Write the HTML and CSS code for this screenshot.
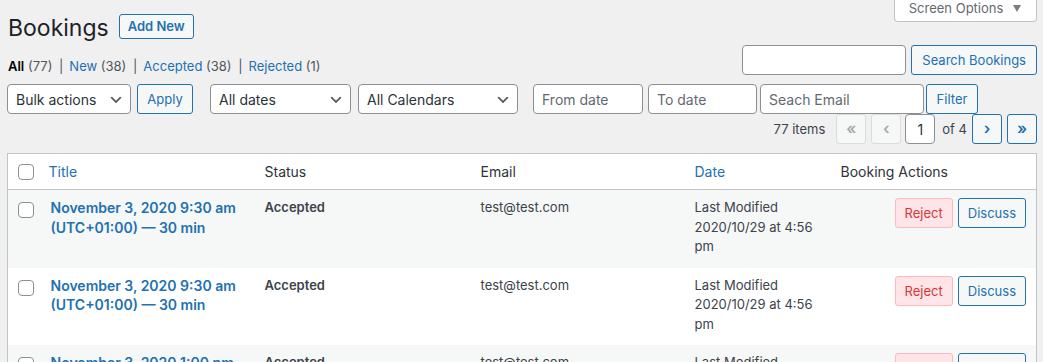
FILE: index.html
```html
<!DOCTYPE html>
<html lang="en">
<head>
    <meta charset="UTF-8">
    <meta name="viewport" content="width=device-width, initial-scale=1.0">
    <title>Bookings</title>
    <link rel="stylesheet" href="styles.css">
</head>
<body>
    <div class="wrap">
        <!-- Screen Options tab -->
        <div class="screen-options">Screen Options <span class="so-arrow"></span></div>

        <!-- Page heading -->
        <div class="page-head">
            <h1 class="page-title">Bookings</h1>
            <a class="page-title-action" href="#">Add New</a>
        </div>

        <!-- Views + search -->
        <div class="views-row">
            <ul class="subsubsub">
                <li><span class="current">All</span> <span class="count">(77)</span> <span class="sep">|</span></li>
                <li><a href="#">New</a> <span class="count">(38)</span> <span class="sep">|</span></li>
                <li><a href="#">Accepted</a> <span class="count">(38)</span> <span class="sep">|</span></li>
                <li><a href="#">Rejected</a> <span class="count">(1)</span></li>
            </ul>
            <div class="search-box">
                <input type="search" class="search-input">
                <button class="button search-btn">Search Bookings</button>
            </div>
        </div>

        <!-- Filters -->
        <div class="tablenav">
            <select class="select bulk"><option>Bulk actions</option></select>
            <button class="button apply">Apply</button>
            <select class="select dates"><option>All dates</option></select>
            <select class="select calendars"><option>All Calendars</option></select>
            <input type="text" class="text-input from" placeholder="From date">
            <input type="text" class="text-input to" placeholder="To date">
            <input type="text" class="text-input email" placeholder="Seach Email">
            <button class="button filter">Filter</button>
        </div>

        <!-- Pagination -->
        <div class="pagination">
            <span class="num-items">77 items</span>
            <span class="page-btn disabled first">&laquo;</span>
            <span class="page-btn disabled">&lsaquo;</span>
            <input type="text" class="current-page" value="1">
            <span class="of-pages">of 4</span>
            <a class="page-btn next" href="#">&rsaquo;</a>
            <a class="page-btn" href="#">&raquo;</a>
        </div>

        <!-- List table -->
        <table class="list-table">
            <colgroup>
                <col class="col-cb">
                <col class="col-title">
                <col class="col-status">
                <col class="col-email">
                <col class="col-date">
                <col>
            </colgroup>
            <thead>
                <tr>
                    <th class="check-column"><input type="checkbox" class="cb"></th>
                    <th><a href="#">Title</a></th>
                    <th>Status</th>
                    <th>Email</th>
                    <th><a href="#">Date</a></th>
                    <th>Booking Actions</th>
                </tr>
            </thead>
            <tbody>
                <tr>
                    <td class="check-column"><input type="checkbox" class="cb"></td>
                    <td><a class="row-title" href="#">November 3, 2020 9:30 am (UTC+01:00) — 30 min</a></td>
                    <td class="status">Accepted</td>
                    <td>test@test.com</td>
                    <td>Last Modified<br>2020/10/29 at 4:56 pm</td>
                    <td class="actions"><button class="button reject">Reject</button><button class="button">Discuss</button></td>
                </tr>
                <tr>
                    <td class="check-column"><input type="checkbox" class="cb"></td>
                    <td><a class="row-title" href="#">November 3, 2020 9:30 am (UTC+01:00) — 30 min</a></td>
                    <td class="status">Accepted</td>
                    <td>test@test.com</td>
                    <td>Last Modified<br>2020/10/29 at 4:56 pm</td>
                    <td class="actions"><button class="button reject">Reject</button><button class="button">Discuss</button></td>
                </tr>
                <tr>
                    <td class="check-column"><input type="checkbox" class="cb"></td>
                    <td><a class="row-title" href="#">November 3, 2020 1:00 pm (UTC+01:00) — 30 min</a></td>
                    <td class="status">Accepted</td>
                    <td>test@test.com</td>
                    <td>Last Modified<br>2020/10/29 at 4:56 pm</td>
                    <td class="actions"><button class="button reject">Reject</button><button class="button">Discuss</button></td>
                </tr>
            </tbody>
        </table>
    </div>
</body>
</html>
```

FILE: styles.css
```css
html, body {
    height: 100%;
    overflow: hidden;
}

body {
    margin: 0;
    background: #f0f0f1;
    color: #3c434a;
    font-family: Inter, "Liberation Sans", sans-serif;
    font-size: 13px;
    line-height: 1.4;
}

a {
    color: #2271b1;
    text-decoration: none;
}

.wrap {
    padding: 0 6px 0 7px;
}

/* Screen Options */
.screen-options {
    float: right;
    height: 22px;
    box-sizing: border-box;
    padding: 0 15px 0 14px;
    background: #fff;
    border: 1px solid #c3c4c7;
    border-top: none;
    border-radius: 0 0 4px 4px;
    color: #646970;
    font-size: 13px;
    line-height: 17px;
}

.so-arrow {
    display: inline-block;
    width: 0;
    height: 0;
    margin-left: 6px;
    border-left: 4px solid transparent;
    border-right: 4px solid transparent;
    border-top: 7px solid #787c82;
    vertical-align: 1px;
}

/* Heading */
.page-head {
    display: flex;
    align-items: flex-start;
    gap: 10px;
    padding-top: 14px;
}

.page-title {
    margin: 0;
    padding: 2px 0 0 1px;
    font-size: 23px;
    font-weight: 400;
    line-height: 25px;
    color: #1d2327;
}

.page-title-action {
    display: inline-block;
    height: 25px;
    box-sizing: border-box;
    padding: 0 8px;
    border: 1px solid #2271b1;
    border-radius: 3px;
    background: #f6f7f7;
    color: #2271b1;
    font-size: 13px;
    font-weight: 600;
    line-height: 23px;
}

/* Views + search */
.views-row {
    display: flex;
    justify-content: space-between;
    align-items: flex-start;
    margin-top: 4px;
}

.subsubsub {
    display: flex;
    margin: 12px 0 0;
    padding: 0 0 0 1px;
    list-style: none;
    color: #50575e;
    font-size: 13px;
    line-height: 18px;
}

.subsubsub li {
    white-space: pre;
}

.subsubsub .current {
    color: #000;
    font-weight: 600;
}

.subsubsub .sep {
    margin: 0 6px 0 3px;
    color: #50575e;
}

.search-box {
    display: flex;
    gap: 5px;
}

.search-input {
    width: 164px;
    height: 30px;
    box-sizing: border-box;
    border: 1px solid #8c8f94;
    border-radius: 4px;
    background: #fff;
}

.search-btn {
    padding: 0 9px;
    white-space: nowrap;
}

/* Buttons */
.button {
    height: 30px;
    box-sizing: border-box;
    padding: 0 10px;
    border: 1px solid #2271b1;
    border-radius: 3px;
    background: #f6f7f7;
    color: #2271b1;
    font-family: inherit;
    font-size: 13px;
    line-height: 28px;
}

/* Filters */
.tablenav {
    display: flex;
    align-items: center;
    margin-top: 9px;
}

.select {
    height: 30px;
    box-sizing: border-box;
    padding: 0 24px 0 8px;
    border: 1px solid #8c8f94;
    border-radius: 4px;
    background: #fff url("data:image/svg+xml;charset=US-ASCII,%3Csvg%20width%3D%2220%22%20height%3D%2220%22%20xmlns%3D%22http%3A%2F%2Fwww.w3.org%2F2000%2Fsvg%22%3E%3Cpath%20d%3D%22M5%206l5%205%205-5%202%201-7%207-7-7%202-1z%22%20fill%3D%22%23555%22%2F%3E%3C%2Fsvg%3E") no-repeat right 6px top 55%;
    background-size: 16px 16px;
    color: #2c3338;
    font-family: inherit;
    font-size: 14px;
    -webkit-appearance: none;
    appearance: none;
}

.select.bulk { width: 124px; }
.apply { width: 56px; margin-left: 6px; padding: 0; }
.select.dates { width: 141px; margin-left: 17px; }
.select.calendars { width: 160px; margin-left: 7px; }

.text-input {
    height: 30px;
    box-sizing: border-box;
    padding: 0 8px;
    border: 1px solid #8c8f94;
    border-radius: 4px;
    background: #fff;
    color: #2c3338;
    font-family: inherit;
    font-size: 14px;
}

.text-input::placeholder {
    color: #646970;
}

.text-input.from { width: 110px; margin-left: 15px; }
.text-input.to { width: 109px; margin-left: 5px; }
.text-input.email { width: 164px; margin-left: 3px; }
.filter { width: 52px; margin-left: 2px; padding: 0; }

/* Pagination */
.pagination {
    display: flex;
    justify-content: flex-end;
    align-items: center;
    height: 30px;
    font-size: 13px;
    color: #3c434a;
}

.num-items {
    margin-right: 11px;
}

.page-btn {
    display: inline-block;
    width: 30px;
    height: 30px;
    box-sizing: border-box;
    margin-left: 5px;
    border: 1px solid #2271b1;
    border-radius: 3px;
    background: #f6f7f7;
    color: #2271b1;
    font-size: 16px;
    font-weight: 600;
    line-height: 26px;
    text-align: center;
}

.page-btn.first {
    margin-left: 0;
}

.page-btn.disabled {
    border-color: #dcdcde;
    color: #a7aaad;
}

.current-page {
    width: 30px;
    height: 30px;
    box-sizing: border-box;
    margin-left: 4px;
    border: 1px solid #8c8f94;
    border-radius: 4px;
    background: #fff;
    color: #2c3338;
    font-family: inherit;
    font-size: 14px;
    text-align: center;
}

.of-pages {
    margin: 0 0 0 7px;
}

.page-btn.next {
    margin-left: 5px;
}

/* Table */
.list-table {
    width: 100%;
    margin-top: 9px;
    border: 1px solid #c3c4c7;
    border-collapse: collapse;
    border-spacing: 0;
    table-layout: fixed;
    background: #fff;
}

.col-cb { width: 31px; }
.col-title { width: 216px; }
.col-status { width: 216px; }
.col-email { width: 214px; }
.col-date { width: 146px; }

.list-table th {
    padding: 8px 10px;
    border-bottom: 1px solid #c3c4c7;
    color: #2c3338;
    font-size: 14px;
    font-weight: 400;
    line-height: 19px;
    text-align: left;
}

.list-table td {
    padding: 8px 10px 11px;
    font-size: 13px;
    line-height: 19.5px;
    vertical-align: top;
}

.list-table .check-column {
    padding: 0 0 0 10px;
    vertical-align: middle;
}

.list-table td.check-column {
    padding-top: 12px;
    vertical-align: top;
}

.list-table tbody tr:nth-child(odd) {
    background: #f6f7f7;
}

.cb {
    display: block;
    width: 16px;
    height: 16px;
    margin: 0;
    box-sizing: border-box;
    border: 1px solid #8c8f94;
    border-radius: 4px;
    background: #fff;
    -webkit-appearance: none;
    appearance: none;
}

.row-title {
    display: block;
    padding-left: 2px;
    font-size: 14px;
    font-weight: 600;
}

.status {
    color: #3c434a;
    font-weight: 600;
}

.actions {
    text-align: right;
    white-space: nowrap;
}

.actions .button {
    margin-left: 5px;
    padding: 0 9px;
}

.actions .reject {
    border-color: #ffb8bd;
    background: #ffe5e7;
    color: #d63638;
}
```
